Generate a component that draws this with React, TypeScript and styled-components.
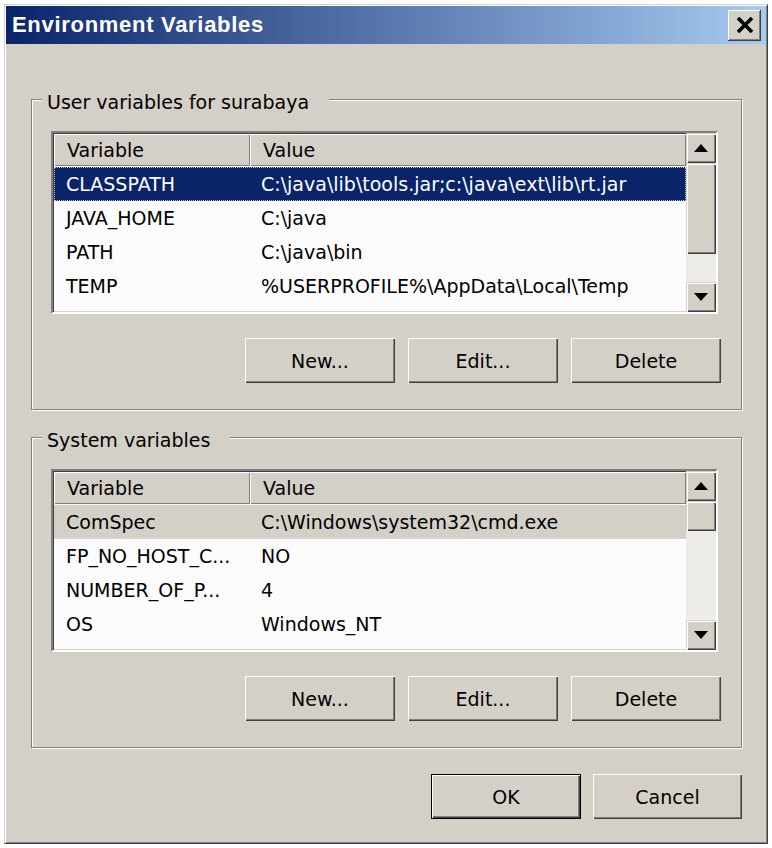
import React from 'react'
import styled, { createGlobalStyle } from 'styled-components'

const Global = createGlobalStyle`
  body {
    margin: 0;
    background: #fff;
    font-family: "DejaVu Sans", Verdana, sans-serif;
    color: #000;
  }
`

const Window = styled.div`
  box-sizing: border-box;
  margin: 4px 0 0 4px;
  width: 764px;
  height: 840px;
  padding: 1px;
  border: 1px solid;
  border-color: #d4d0c8 #404040 #404040 #d4d0c8;
  box-shadow: inset 1px 1px 0 #fff, inset -1px -1px 0 #808080;
  background: #d4d0c8;
  display: flex;
  flex-direction: column;
`

const TitleBar = styled.div`
  height: 38px;
  flex: none;
  display: flex;
  align-items: center;
  justify-content: space-between;
  padding: 0 5px 0 6px;
  background: linear-gradient(to right, #0a246a, #a6caf0);
`

const TitleText = styled.span`
  font-family: "Liberation Sans", Arial, sans-serif;
  font-weight: bold;
  font-size: 22px;
  letter-spacing: 0.7px;
  color: #fff;
`

const CloseButton = styled.button`
  width: 33px;
  height: 31px;
  padding: 0;
  border: none;
  background: #d4d0c8;
  box-shadow: inset -1px -1px 0 #404040, inset 1px 1px 0 #fff,
    inset -2px -2px 0 #808080;
  display: flex;
  align-items: center;
  justify-content: center;
`

const Body = styled.div`
  flex: 1;
  padding: 55px 24px 0 25px;
  display: flex;
  flex-direction: column;
`

const Group = styled.div<{ $gap?: number }>`
  position: relative;
  margin-top: ${p => p.$gap ?? 0}px;
  border: 1px solid #808080;
  box-shadow: inset 1px 1px 0 #fff, 1px 1px 0 #fff;
  padding: 31px 20px 26px 19px;
`

const Legend = styled.span`
  position: absolute;
  top: -10px;
  left: 10px;
  padding: 0 20px 0 5px;
  line-height: 24px;
  font-size: 19px;
  background: #d4d0c8;
`

const ListView = styled.div`
  box-sizing: border-box;
  height: 183px;
  margin-right: 3px;
  border: 2px solid;
  border-color: #808080 #fff #fff #808080;
  box-shadow: inset 1px 1px 0 #404040, inset -1px -1px 0 #d4d0c8;
  display: grid;
  grid-template-columns: 1fr 30px;
  background: #fcfcfc;
`

const Table = styled.div`
  overflow: hidden;
  margin: 1px 0 0 1px;
`

const HeaderRow = styled.div`
  display: grid;
  grid-template-columns: 196px 1fr;
  height: 32px;
  margin-bottom: 1px;
`

const HeaderCell = styled.div`
  background: #d4d0c8;
  box-shadow: inset 1px 1px 0 #fff, inset -1px -1px 0 #808080;
  padding-left: 13px;
  font-size: 19px;
  line-height: 32px;
  white-space: nowrap;
`

const Row = styled.div<{ $state?: 'focus' | 'inactive' }>`
  display: grid;
  grid-template-columns: 196px 1fr;
  height: 34px;
  font-size: 19px;
  line-height: 34px;
  white-space: nowrap;
  background: ${p =>
    p.$state === 'focus' ? '#0a246a' : p.$state === 'inactive' ? '#d4d0c8' : 'transparent'};
  color: ${p => (p.$state === 'focus' ? '#fff' : '#000')};
  outline: ${p => (p.$state === 'focus' ? '1px dotted #c8c4bc' : 'none')};
  outline-offset: -1px;
`

const Cell = styled.div<{ $pad: number }>`
  padding-left: ${p => p.$pad}px;
  overflow: hidden;
`

const ScrollBar = styled.div`
  display: flex;
  flex-direction: column;
  background: #eeece8;
`

const ScrollButton = styled.div<{ $size: number }>`
  height: ${p => p.$size}px;
  flex: none;
  background: #d4d0c8;
  box-shadow: inset 1px 1px 0 #d4d0c8, inset 2px 2px 0 #fff,
    inset -1px -1px 0 #404040, inset -2px -2px 0 #808080;
  display: flex;
  align-items: center;
  justify-content: center;
`

const Track = styled.div`
  flex: 1;
`

const ButtonRow = styled.div<{ $top: number; $gap: number }>`
  display: flex;
  justify-content: flex-end;
  gap: ${p => p.$gap}px;
  margin-top: ${p => p.$top}px;
`

const Button = styled.button<{ $default?: boolean; $w?: number }>`
  box-sizing: border-box;
  width: ${p => p.$w ?? 150}px;
  height: 45px;
  padding: 0;
  border: ${p => (p.$default ? '1px solid #000' : 'none')};
  background: #d4d0c8;
  box-shadow: inset 1px 1px 0 #fff, inset -1px -1px 0 #404040,
    inset -2px -2px 0 #808080;
  font-family: "DejaVu Sans", Verdana, sans-serif;
  font-size: 19px;
  color: #000;
`

const Arrow = ({ up }: { up?: boolean }) => (
  <svg width="14" height="8" viewBox="0 0 14 8">
    <polygon points={up ? '7,0 14,8 0,8' : '0,0 14,0 7,8'} fill="#000" />
  </svg>
)

type Item = { name: string; value: string; state?: 'focus' | 'inactive' }

const VarList = ({ items, thumb }: { items: Item[]; thumb: number }) => (
  <ListView>
    <Table>
      <HeaderRow>
        <HeaderCell>Variable</HeaderCell>
        <HeaderCell>Value</HeaderCell>
      </HeaderRow>
      {items.map(it => (
        <Row key={it.name} $state={it.state}>
          <Cell $pad={12}>{it.name}</Cell>
          <Cell $pad={11}>{it.value}</Cell>
        </Row>
      ))}
    </Table>
    <ScrollBar>
      <ScrollButton $size={30}>
        <Arrow up />
      </ScrollButton>
      <ScrollButton $size={thumb} />
      <Track />
      <ScrollButton $size={30}>
        <Arrow />
      </ScrollButton>
    </ScrollBar>
  </ListView>
)

const userVars: Item[] = [
  { name: 'CLASSPATH', value: 'C:\\java\\lib\\tools.jar;c:\\java\\ext\\lib\\rt.jar', state: 'focus' },
  { name: 'JAVA_HOME', value: 'C:\\java' },
  { name: 'PATH', value: 'C:\\java\\bin' },
  { name: 'TEMP', value: '%USERPROFILE%\\AppData\\Local\\Temp' },
  { name: 'TMP', value: '%USERPROFILE%\\AppData\\Local\\Temp' },
]

const systemVars: Item[] = [
  { name: 'ComSpec', value: 'C:\\Windows\\system32\\cmd.exe', state: 'inactive' },
  { name: 'FP_NO_HOST_C...', value: 'NO' },
  { name: 'NUMBER_OF_P...', value: '4' },
  { name: 'OS', value: 'Windows_NT' },
  { name: 'Path', value: 'C:\\Windows\\system32;C:\\Windows;C:\\Windows\\System32\\Wbem' },
]

const App: React.FC = () => (
  <>
    <Global />
    <Window>
      <TitleBar>
        <TitleText>Environment Variables</TitleText>
        <CloseButton aria-label="Close">
          <svg width="18" height="16" viewBox="0 0 18 16">
            <path d="M2 1 L16 15 M16 1 L2 15" stroke="#000" strokeWidth="3.6" />
          </svg>
        </CloseButton>
      </TitleBar>
      <Body>
        <Group>
          <Legend>User variables for surabaya</Legend>
          <VarList items={userVars} thumb={91} />
          <ButtonRow $top={24} $gap={13}>
            <Button>New...</Button>
            <Button>Edit...</Button>
            <Button>Delete</Button>
          </ButtonRow>
        </Group>
        <Group $gap={27}>
          <Legend>System variables</Legend>
          <VarList items={systemVars} thumb={30} />
          <ButtonRow $top={24} $gap={13}>
            <Button>New...</Button>
            <Button>Edit...</Button>
            <Button>Delete</Button>
          </ButtonRow>
        </Group>
        <ButtonRow $top={26} $gap={12}>
          <Button $default>OK</Button>
          <Button $w={149}>Cancel</Button>
        </ButtonRow>
      </Body>
    </Window>
  </>
)

export default App
